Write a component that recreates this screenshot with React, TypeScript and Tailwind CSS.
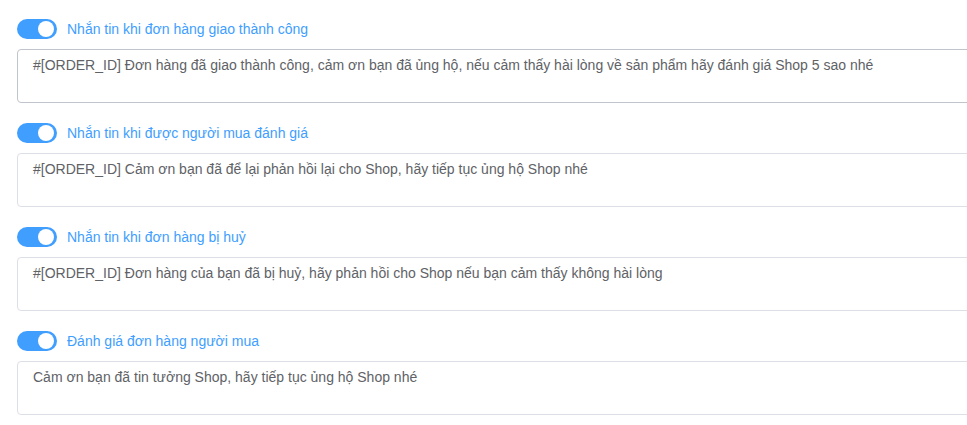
import React from "react";

const items = [
  {
    label: "Nhắn tin khi đơn hàng giao thành công",
    text: "#[ORDER_ID] Đơn hàng đã giao thành công, cảm ơn bạn đã ủng hộ, nếu cảm thấy hài lòng về sản phẩm hãy đánh giá Shop 5 sao nhé",
    hover: true,
  },
  {
    label: "Nhắn tin khi được người mua đánh giá",
    text: "#[ORDER_ID] Cảm ơn bạn đã để lại phản hồi lại cho Shop, hãy tiếp tục ủng hộ Shop nhé",
    hover: false,
  },
  {
    label: "Nhắn tin khi đơn hàng bị huỷ",
    text: "#[ORDER_ID] Đơn hàng của bạn đã bị huỷ, hãy phản hồi cho Shop nếu bạn cảm thấy không hài lòng",
    hover: false,
  },
  {
    label: "Đánh giá đơn hàng người mua",
    text: "Cảm ơn bạn đã tin tưởng Shop, hãy tiếp tục ủng hộ Shop nhé",
    hover: false,
  },
];

export default function App() {
  return (
    <div
      className="w-[967px] h-[425px] overflow-hidden bg-white pl-[17px] pt-[19px]"
      style={{ fontFamily: '"Liberation Sans", Arial, sans-serif' }}
    >
      <div className="flex flex-col gap-[20px]">
        {items.map((it) => (
          <div key={it.label} className="flex flex-col gap-[10px]">
            <div className="flex items-center h-[20px]">
              <span className="relative inline-block w-[40px] h-[20px] rounded-[10px] bg-[#409eff]">
                <span className="absolute top-[2px] right-[3px] w-[16px] h-[16px] rounded-full bg-white" />
              </span>
              <span className="ml-[10px] text-[14px] leading-[20px] text-[#409eff]">
                {it.label}
              </span>
            </div>
            <textarea
              readOnly
              rows={2}
              value={it.text}
              className={`w-[1000px] h-[54px] resize-none rounded-[4px] border bg-white px-[15px] py-[5px] text-[14px] leading-[21px] text-[#606266] outline-none ${
                it.hover ? "border-[#c0c4cc]" : "border-[#dcdfe6]"
              }`}
              style={{ fontFamily: '"Liberation Sans", Arial, sans-serif' }}
            />
          </div>
        ))}
      </div>
    </div>
  );
}
